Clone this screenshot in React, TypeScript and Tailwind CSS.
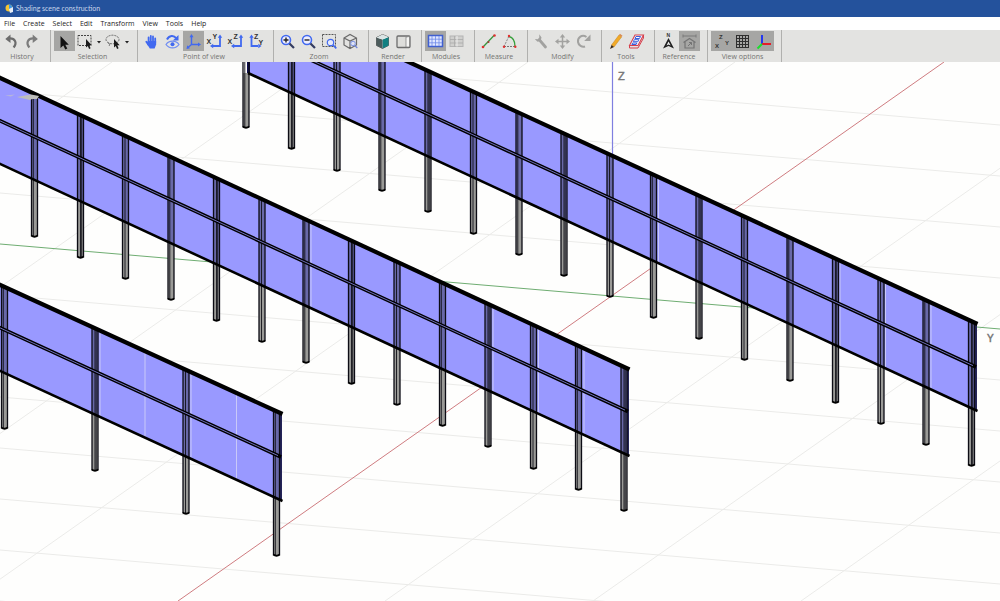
import React, { useState } from 'react'

const MENUS = ['File', 'Create', 'Select', 'Edit', 'Transform', 'View', 'Tools', 'Help']

const BLUE = '#4169f0'
const GRAY = '#a2a2a0'

function Icon({ children }: { children: React.ReactNode }) {
  return (
    <svg viewBox="0 0 21 20" className="w-[21px] h-5" fill="none" aria-hidden="true">
      {children}
    </svg>
  )
}

function Cursor() {
  return <path d="M11 8v8.600l1.800-1.700 1.300 3 1.500-.7-1.300-2.900h2.400z" fill="#1c1c1c" />
}

function Letter({ x, y, c, size = 7 }: { x: number; y: number; c: string; size?: number }) {
  return (
    <text x={x} y={y} fontSize={size} fontWeight="bold" fill="#333" fontFamily="Liberation Sans, sans-serif">{c}</text>
  )
}

const ICONS: Record<string, React.ReactNode> = {
  Undo: <><path d="M8 7.500C14 7 16.500 11.500 12.600 16.500" stroke="#6c6c6c" strokeWidth="2.200" /><path d="M4.300 8L9.500 3.600V12z" fill="#6c6c6c" /></>,
  Redo: <><path d="M12 7.500C6 7 3.500 11.500 7.400 16.500" stroke="#7c7c7c" strokeWidth="2.200" /><path d="M15.900 8L10.700 3.600V12z" fill="#7c7c7c" /></>,
  Pointer: <path d="M6.500 5v12l2.800-2.500 2 4 2-1-2-3.800h3.500z" fill="#111" />,
  'Rectangle selection': <><rect x="3" y="4.500" width="13" height="10" stroke="#444" strokeDasharray="2 1" /><Cursor /></>,
  'Lasso selection': <><ellipse cx="9.500" cy="8.500" rx="6.500" ry="4.300" stroke="#666" strokeDasharray="2 1" /><path d="M5 12c2 0 2 2 1 3" stroke="#777" /><Cursor /></>,
  Pan: (
    <>
      <path d="M7.600 12V6.500M9.800 11V5M12 11V5.400M14.200 12V7.500M7.500 14L5.300 10.800" stroke={BLUE} strokeWidth="1.800" strokeLinecap="round" />
      <path d="M6.700 10h8.400v3.500l-1.500 4H8.800L6.300 13.500z" fill={BLUE} />
    </>
  ),
  Orbit: (
    <>
      <path d="M5 8.500C7 4 12 4 14 7" stroke={BLUE} strokeWidth="2" />
      <path d="M16.500 4v5.500h-5.700z" fill={BLUE} />
      <path d="M4 13.500c3-4.500 10-4.500 13 0-3 4.500-10 4.500-13 0z" stroke="#6f8cf2" strokeWidth="1.200" />
      <circle cx="10.500" cy="13.300" r="2" fill={BLUE} />
    </>
  ),
  Perspective: (
    <>
      <path d="M8.500 5v8.500H16M8.500 13.500L5 16.500" stroke={BLUE} strokeWidth="1.400" />
      <path d="M8.500 3l2 3.200h-4zM18 13.500l-3 2v-4zM3.500 18l.7-3.700 2.800 2.900z" fill={BLUE} />
    </>
  ),
  'XY view': <><path d="M16 6v9H9" stroke={BLUE} strokeWidth="1.800" /><path d="M16 3.500l2.200 3.200h-4.400zM6 15l3.200-2.200v4.400z" fill={BLUE} /><Letter x={2.500} y={13} c="X" /><Letter x={8.500} y={8} c="Y" /></>,
  'XZ view': <><path d="M16 6v9H9" stroke={BLUE} strokeWidth="1.800" /><path d="M16 3.500l2.200 3.200h-4.400zM6 15l3.200-2.200v4.400z" fill={BLUE} /><Letter x={2.500} y={13} c="X" /><Letter x={8.500} y={8} c="Z" /></>,
  'ZY view': <><path d="M5.500 6v9H12" stroke={BLUE} strokeWidth="1.800" /><path d="M5.500 3.500l2.200 3.200H3.300zM15.500 15l-3.200-2.200v4.400z" fill={BLUE} /><Letter x={8} y={8} c="Z" /><Letter x={12.500} y={13.500} c="Y" /></>,
  'Zoom in': <><circle cx="9" cy="9" r="4.500" stroke={BLUE} strokeWidth="1.600" fill="#eef" /><path d="M12.500 12.500L17 17" stroke="#333c60" strokeWidth="2.200" /><path d="M6.500 9h5M9 6.500v5" stroke="#222" strokeWidth="1.400" /></>,
  'Zoom out': <><circle cx="9" cy="9" r="4.500" stroke={BLUE} strokeWidth="1.600" fill="#eef" /><path d="M12.500 12.500L17 17" stroke="#333c60" strokeWidth="2.200" /><path d="M6.500 9h5" stroke="#222" strokeWidth="1.400" /></>,
  'Zoom region': <><rect x="3.500" y="3.500" width="13" height="12" stroke="#555" strokeDasharray="2 1" /><circle cx="11.500" cy="11.500" r="3.200" stroke={BLUE} strokeWidth="1.200" fill="#e6eafa" /><path d="M14 14l3.300 3.300" stroke={BLUE} strokeWidth="1.700" /></>,
  'Zoom all': <><path d="M4 7l6-3.500L16.500 7v7L10 17.500 4 14zM4 7l6 3 6.500-3M10 10v7.500" stroke="#6a6a6a" strokeWidth="1.200" /><circle cx="13" cy="12.500" r="2.300" stroke="#7a92e6" fill="#dfe3f3" /><path d="M14.800 14.500l2.500 2.500" stroke="#6b82d8" strokeWidth="1.200" /></>,
  'Render faces': <><path d="M4.500 6.500L10.500 3.500l6 2.500v8.500l-6 3-6-3z" fill="#f4f4f4" stroke="#444" strokeWidth=".8" /><path d="M10.500 8.500l6-2.500v8.500l-6 3z" fill="#118081" /><path d="M4.500 6.500l6 2v9l-6-3z" fill="#4c5c5c" /><path d="M4.500 6.500L10.500 3.500l6 2.500-6 2.500z" fill="#dbe5e5" /></>,
  'Render edges': <><rect x="4" y="5" width="13" height="11.500" rx="1" stroke="#6d6d6d" strokeWidth="1.300" fill="#dededb" /><path d="M13 6l3.500-.5v10.500H13z" fill="#f6f6f4" stroke="#777" strokeWidth=".7" /></>,
  Modules: <><rect x="3.500" y="4.500" width="14" height="11" fill="#dfe6ff" stroke="#4060d0" strokeWidth="1.500" /><path d="M4 8.200h13M4 11.800h13M7 5v10M10.500 5v10M14 5v10" stroke="#6d89e8" strokeWidth=".8" /></>,
  'Module frames': <><rect x="4" y="5" width="13" height="10.500" stroke="#b4b4b4" fill="#d0d0ce" /><path d="M4 8.500h13M4 12h13M8.500 5v10.500" stroke="#aaa" strokeWidth=".8" /><path d="M11 5v10.500" stroke="#eee" /></>,
  'Measure distance': <><path d="M5.500 15.500L16 4.500" stroke="#38953d" strokeWidth="1.300" /><circle cx="5" cy="16" r="1.300" fill="#e03030" /><circle cx="10.500" cy="11" r="1" fill="#a33" /><circle cx="16.500" cy="4.500" r="1.300" fill="#e03030" /></>,
  'Measure angle': <><path d="M5 15.500L10 5" stroke="#888" strokeDasharray="2 1" /><path d="M5 15.500h11" stroke="#777" strokeDasharray="2 1" /><path d="M10 5.500c4 1 6 5 6 10" stroke="#35a13c" strokeWidth="1.300" /><circle cx="10" cy="5" r="1.200" fill="#e03030" /><circle cx="5" cy="15.800" r="1.200" fill="#e03030" /><circle cx="16.300" cy="15.800" r="1.200" fill="#e03030" /></>,
  Settings: (
    <>
      <path d="M8.500 9L14.500 16" stroke={GRAY} strokeWidth="2.800" strokeLinecap="round" />
      <path d="M8.300 3.300L10.500 6.500 9.500 10 6.500 10.800 3.800 8 6.800 8.200 8.300 6.500z" fill={GRAY} />
    </>
  ),
  Move: <><path d="M10.500 5v11M5 10.500h11" stroke={GRAY} strokeWidth="1.500" /><path d="M10.500 3l2.700 3.500H7.800zM10.500 18l-2.700-3.500h5.400zM3 10.500l3.500-2.700v5.400zM18 10.500l-3.500-2.700v5.400z" fill={GRAY} /></>,
  Rotate: <><path d="M13.500 6C9 3 4.500 6.500 5 11c.5 3.500 4 5.500 7 4.500" stroke={GRAY} strokeWidth="2" /><path d="M17.500 3.500V10h-6.300z" fill={GRAY} /></>,
  Edit: <><path d="M6.500 14L14 4l2.500 2L9 16z" fill="#f1aa27" stroke="#c5821c" strokeWidth=".5" /><path d="M6.500 14L9 16l-4 2z" fill="#3a2a1a" /><path d="M14 4l1-1.300 2.500 2L16.500 6z" fill="#d88c52" /></>,
  Zones: (
    <>
      <path d="M3.500 14.500L9 4h8.500L12 14.500z" fill="#f4f5fd" stroke="#d7404d" strokeWidth="1.100" />
      <path d="M3.500 14.500V17H12l5.500-10V4" stroke="#d7404d" />
      <path d="M10 5.500h4.500l-1 2H9zM8.300 8.700h4.500l-1 2H7.300zM6.600 12h4.200l-.7 1.500H5.900z" fill="#fff" stroke="#3e61db" />
    </>
  ),
  North: <><Letter x={8.500} y={6} c="N" size={5} /><path d="M10.500 7L16 17.500l-5.500-2.500L5 17.500z" fill="#1f1f1f" /><path d="M10.500 10.500l2.200 4-2.200-1-2 1z" fill="#eee" /></>,
  'Building reference': <><path d="M4 5h13M4 3.500v3M17 3.500v3" stroke="#7a7a7a" /><path d="M4.500 11.500l6-4 6 4M6 10.500v6.500h9v-6.500" stroke="#747474" strokeWidth="1.200" /><path d="M9 15l3.500-3.500M10 11.500h2.500V14" stroke="#747474" /></>,
  'Axis labels': <><Letter x={8} y={8} c="Z" size={6} /><Letter x={4} y={17} c="X" size={6} /><Letter x={14} y={14} c="Y" size={6} /></>,
  Grid: <path d="M4.500 4v13M7.500 4v13M10.500 4v13M13.500 4v13M16.500 4v13M4 4.500h13M4 7.500h13M4 10.500h13M4 13.500h13M4 16.500h13" stroke="#2e2e2e" />,
  Axes: <><path d="M9 4v9" stroke="#2438f0" strokeWidth="2" /><path d="M9 13h9" stroke="#e51c28" strokeWidth="2" /><path d="M9 13l-4.500 4.500" stroke="#19e12c" strokeWidth="2" /></>,
}

interface Group {
  label: string
  pad: string
  tools: string[]
}

const GROUPS: Group[] = [
  { label: 'History', pad: 'pl-px pr-[7px]', tools: ['Undo', 'Redo'] },
  { label: 'Selection', pad: 'pl-[3px] pr-[6px]', tools: ['Pointer', 'Rectangle selection', 'Lasso selection'] },
  { label: 'Point of view', pad: 'pl-[3px] pr-[6px]', tools: ['Pan', 'Orbit', 'Perspective', 'XY view', 'XZ view', 'ZY view'] },
  { label: 'Zoom', pad: 'pl-[3px] pr-[7px]', tools: ['Zoom in', 'Zoom out', 'Zoom region', 'Zoom all'] },
  { label: 'Render', pad: 'pl-[3px] pr-[7px]', tools: ['Render faces', 'Render edges'] },
  { label: 'Modules', pad: 'pl-[3px] pr-[7px]', tools: ['Modules', 'Module frames'] },
  { label: 'Measure', pad: 'pl-[3px] pr-[7px]', tools: ['Measure distance', 'Measure angle'] },
  { label: 'Modify', pad: 'pl-[3px] pr-[7px]', tools: ['Settings', 'Move', 'Rotate'] },
  { label: 'Tools', pad: 'pl-[3px] pr-[7px]', tools: ['Edit', 'Zones'] },
  { label: 'Reference', pad: 'pl-[3px] pr-[7px]', tools: ['North', 'Building reference'] },
  { label: 'View options', pad: 'pl-[3px] pr-[7px]', tools: ['Axis labels', 'Grid', 'Axes'] },
]

const DROPDOWNS = ['Rectangle selection', 'Lasso selection']

function Toolbar() {
  const [active, setActive] = useState<string[]>(['Pointer', 'Perspective', 'Modules', 'Building reference', 'Axis labels', 'Grid', 'Axes'])

  const toggle = (name: string) =>
    setActive((a) => (a.includes(name) ? a.filter((n) => n !== name) : [...a, name]))

  return (
    <div className="flex h-8 bg-[#e3e3e1]">
      {GROUPS.map((g) => (
        <div key={g.label} className={`flex flex-col border-r border-[#b0b0ae] pt-px ${g.pad}`}>
          <div className="flex">
            {g.tools.map((t) => (
              <React.Fragment key={t}>
                <button
                  type="button"
                  aria-label={t}
                  aria-pressed={active.includes(t)}
                  onClick={() => toggle(t)}
                  className={`w-[21px] h-5 ${active.includes(t) ? 'bg-[#a6a6a4]' : 'hover:bg-[#d2d2d0]'}`}
                >
                  <Icon>{ICONS[t]}</Icon>
                </button>
                {DROPDOWNS.includes(t) && (
                  <button type="button" aria-label={`${t} options`} className="w-[7px] h-5">
                    <svg viewBox="0 0 7 20" className="w-[7px] h-5" aria-hidden="true"><path d="M1 10h4l-2 2.500z" fill="#222" /></svg>
                  </button>
                )}
              </React.Fragment>
            ))}
          </div>
          <span className="text-center text-[7px] leading-[11px] text-[#737371] whitespace-nowrap">{g.label}</span>
        </div>
      ))}
    </div>
  )
}

interface Row {
  x0: number
  x1: number
  // y of the top, middle and bottom rails at x0 and x1
  top: [number, number]
  mid: [number, number]
  bottom: [number, number]
  posts: [number, number][]
  seams: number[]
}

const ROWS: Row[] = [
  {
    x0: 248, x1: 977,
    top: [-12, 324], mid: [32, 368], bottom: [73, 411],
    posts: [[246, 128], [291.5, 149], [337, 171], [382, 191], [428, 212], [473.5, 234], [519, 255], [564, 276], [610, 297], [653.5, 318], [699, 339], [744.5, 360], [790, 381], [835.5, 403], [881, 424], [926, 445], [971.5, 466]],
    seams: [658.5, 840, 885.500, 931],
  },
  {
    x0: -4, x1: 629,
    top: [76, 369.5], mid: [120, 412.5], bottom: [162, 456],
    posts: [[34.5, 237], [80.5, 258], [125.5, 279], [171, 300], [216.5, 321], [262, 342], [306, 363], [351.5, 384], [397, 405], [442.5, 426], [488, 447], [533.5, 469], [578.5, 490], [624, 511]],
    seams: [311, 493, 538.5, 584],
  },
  {
    x0: -4, x1: 282,
    top: [283, 414], mid: [327, 458], bottom: [369, 501],
    posts: [[4.5, 429], [95, 471], [186, 514], [276.5, 556]],
    seams: [100, 145, 191, 236.5],
  },
]

function yAt(row: Row, rail: [number, number], x: number) {
  return rail[0] + ((rail[1] - rail[0]) * (x - row.x0)) / (row.x1 - row.x0)
}

function PanelRow({ row }: { row: Row }) {
  const { x0, x1, top, mid, bottom } = row
  return (
    <g>
      <polygon points={`${x0},${top[0]} ${x1},${top[1]} ${x1},${bottom[1]} ${x0},${bottom[0]}`} fill="#9999ff" />
      {row.seams.map((x) => (
        <line key={x} x1={x} x2={x} y1={yAt(row, top, x)} y2={yAt(row, bottom, x)} stroke="#c9c9f8" />
      ))}
      <rect x={x1 - 2.5} y={top[1]} width="2.5" height={bottom[1] - top[1]} fill="#242458" />
      {row.x0 > 0 && <rect x={x0 - 1} y={top[0]} width="3" height={bottom[0] - top[0]} fill="#0c0c50" />}
      {row.posts.map(([x, y], i) => {
        const yt = yAt(row, top, Math.max(x, x0))
        const yb = yAt(row, bottom, Math.max(x, x0))
        const inner = i % 3 === 0 ? [-1.2] : i % 3 === 1 ? [0, 1.2] : [-0.5]
        return (
          <g key={x}>
            <rect x={x - 3} y={yb} width="6" height={y - yb} fill="#9a9a97" />
            {x > x0 && <rect x={x - 3} y={yt} width="6" height={yb - yt} fill="#6868a8" />}
            <path d={`M${x - 3} ${yt}V${y - 1}M${x + 3} ${yt}V${y - 1}`} stroke="#0c0c14" strokeWidth="1.300" />
            {inner.map((d) => (
              <line key={d} x1={x + d} x2={x + d} y1={yt} y2={y - 1} stroke="#111118" strokeWidth=".9" />
            ))}
            <path d={`M${x - 3.3} ${y - 1.5}Q${x} ${y + 1} ${x + 3.3} ${y - 1.5}`} stroke="#000" strokeWidth="1.800" fill="none" />
          </g>
        )
      })}
      <line x1={x0} y1={top[0]} x2={x1 + 0.5} y2={top[1]} stroke="#000" strokeWidth="4.200" />
      <line x1={x0} y1={mid[0] - 1} x2={x1 - 1} y2={mid[1] - 1} stroke="#000" strokeWidth="3.600" />
      <line x1={x0} y1={mid[0] - 1} x2={x1 - 4} y2={mid[1] - 2.4} stroke="#6f6fba" strokeWidth="1" />
      <line x1={x0} y1={bottom[0]} x2={x1 + 0.5} y2={bottom[1]} stroke="#000" strokeWidth="2.600" />
    </g>
  )
}

function Scene() {
  const along = [-4, -3, -2, -1, 1, 2, 3, 4, 5, 6, 7]
  const across = [112, 320, 528, 735, 1151, 1359, 1567]
  return (
    <svg viewBox="0 62 1000 539" className="block w-full h-auto" role="img" aria-label="Shading scene">
      <rect x="0" y="62" width="1000" height="539" fill="#fefefd" />
      <g stroke="#ebebe9" strokeWidth="1">
        {along.map((k) => (
          <line key={k} x1="0" y1={244 + 51 * k} x2="1000" y2={329 + 51 * k} />
        ))}
        {across.map((x) => (
          <line key={x} x1={x} y1="62" x2={x - 766} y2="601" />
        ))}
      </g>
      <line x1="0" y1="244" x2="1000" y2="329" stroke="#6fad72" />
      <line x1="944" y1="62" x2="178" y2="601" stroke="#cf7c80" />
      <line x1="612.5" y1="62" x2="612.5" y2="160" stroke="#7f7fe0" strokeWidth="1.200" />
      {ROWS.map((row) => (
        <PanelRow key={row.x1} row={row} />
      ))}
      <path d="M17 97l14-2.500 8 1.500-2 3h-5l-2 1z" fill="#bdbdbb" />
      <path d="M5 95.500l10-1-4 2z" fill="#b5b5dc" />
      <text x="618" y="80" fontSize="11" fill="#777" stroke="#777" strokeWidth=".5" fontFamily="Liberation Sans, sans-serif">Z</text>
      <text x="987" y="342" fontSize="10" fill="#777" stroke="#777" strokeWidth=".5" fontFamily="Liberation Sans, sans-serif">Y</text>
    </svg>
  )
}

export default function App() {
  return (
    <div className="min-h-screen flex flex-col bg-[#fefefd] font-['Open_Sans',sans-serif] overflow-hidden">
      <header className="flex items-center gap-[2px] h-[17px] px-1 bg-[#24529c]">
        <svg viewBox="0 0 10 10" className="w-[10px] h-[10px]" aria-hidden="true">
          <circle cx="5" cy="4" r="3.500" fill="#f4c534" />
          <path d="M5 .5a3.500 3.500 0 0 1 3.500 4L5 5z" fill="#3d97e6" />
          <path d="M5 5l4-2v5L6 9z" fill="#e8edf5" />
        </svg>
        <h1 className="font-[Lato,sans-serif] text-[7px] leading-[9px] text-[#c8d5ea]">Shading scene construction</h1>
      </header>
      <nav className="flex items-center gap-2 h-[13px] px-1 bg-white">
        {MENUS.map((m) => (
          <button key={m} type="button" className="text-[7px] leading-[9px] text-[#1d1d1d] hover:text-[#24529c]">{m}</button>
        ))}
      </nav>
      <Toolbar />
      <main className="flex-1">
        <Scene />
      </main>
    </div>
  )
}
